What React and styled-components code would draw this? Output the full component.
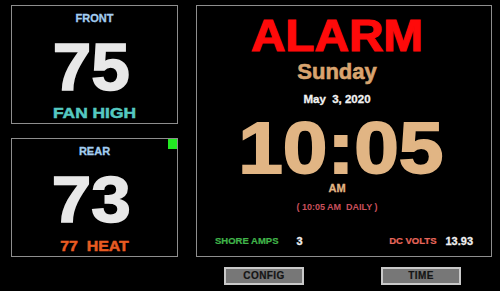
import React from "react";
import styled, { createGlobalStyle } from "styled-components";

const GlobalStyle = createGlobalStyle`
  html, body { margin: 0; padding: 0; background: #000; }
`;

const Screen = styled.div`
  width: 500px;
  height: 291px;
  box-sizing: border-box;
  padding: 5px 0 0 11px;
  display: flex;
  gap: 18px;
  background: #000;
  overflow: hidden;
  font-family: "Liberation Sans", Arial, sans-serif;
  font-weight: 700;
`;

const LeftColumn = styled.div`
  width: 167px;
  display: flex;
  flex-direction: column;
  gap: 14px;
`;

const Gauge = styled.section`
  position: relative;
  height: 119px;
  box-sizing: border-box;
  border: 1px solid #8e8e8e;
  padding-top: 7px;
  display: flex;
  flex-direction: column;
`;

const ZoneLabel = styled.div`
  height: 10px;
  line-height: 10px;
  font-size: 11px;
  font-weight: 700;
  color: #a3cdf0;
  text-align: center;
  -webkit-text-stroke: 0.3px #a3cdf0;
`;

const Temp = styled.div`
  height: 48px;
  line-height: 48px;
  margin-top: 20px;
  font-size: ${(p) => p.$size}px;
  font-weight: 700;
  color: #e8e8e8;
  text-align: center;
  padding-right: 6px;
  transform: scaleX(${(p) => p.$sx});
  -webkit-text-stroke: 1.6px #e8e8e8;
`;

const Mode = styled.div`
  height: 12px;
  line-height: 12px;
  margin-top: 16px;
  font-size: 15px;
  font-weight: 700;
  color: ${(p) => p.$color};
  text-align: center;
  white-space: pre;
  transform: scaleX(${(p) => p.$sx});
  -webkit-text-stroke: 0.5px ${(p) => p.$color};
`;

const StatusDot = styled.span`
  position: absolute;
  top: 0;
  right: 0;
  width: 9px;
  height: 10px;
  background: #23e823;
`;

const RightColumn = styled.div`
  width: 296px;
  display: flex;
  flex-direction: column;
`;

const Panel = styled.section`
  height: 252px;
  box-sizing: border-box;
  border: 1px solid #8e8e8e;
  display: flex;
  flex-direction: column;
`;

const Stack = styled.div`
  padding: 13px 14px 0 0;
  display: flex;
  flex-direction: column;
  text-align: center;
  white-space: pre;
`;

const AlarmTitle = styled.div`
  height: 34px;
  line-height: 34px;
  font-size: 45px;
  font-weight: 700;
  color: #ff0a0a;
  transform: scaleX(1.06);
  -webkit-text-stroke: 1.2px #ff0a0a;
`;

const DayName = styled.div`
  height: 16px;
  line-height: 16px;
  margin-top: 11px;
  font-size: 22px;
  font-weight: 700;
  color: #d9a46f;
  -webkit-text-stroke: 0.6px #d9a46f;
`;

const DateLine = styled.div`
  height: 10px;
  line-height: 10px;
  margin-top: 14px;
  font-size: 11.5px;
  font-weight: 700;
  color: #f2f2f2;
  -webkit-text-stroke: 0.3px #f2f2f2;
`;

const Clock = styled.div`
  height: 54px;
  line-height: 54px;
  margin-top: 17px;
  font-size: 73px;
  font-weight: 700;
  color: #e1b584;
  padding-left: 7px;
  transform: scaleX(1.1);
  -webkit-text-stroke: 1.8px #e1b584;
`;

const Meridiem = styled.div`
  height: 10px;
  line-height: 10px;
  margin-top: 8px;
  font-size: 11px;
  font-weight: 700;
  color: #e1b584;
  -webkit-text-stroke: 0.3px #e1b584;
`;

const AlarmInfo = styled.div`
  height: 8px;
  line-height: 8px;
  margin-top: 10px;
  font-size: 9px;
  font-weight: 700;
  color: #c9505c;
`;

const StatsRow = styled.div`
  margin-top: 25px;
  padding: 0 18px;
  height: 10px;
  line-height: 10px;
  display: flex;
  justify-content: space-between;
  align-items: center;
`;

const Stat = styled.div`
  display: flex;
  align-items: center;
  gap: ${(p) => p.$gap}px;
`;

const StatLabel = styled.span`
  font-size: 9.5px;
  font-weight: 700;
  color: ${(p) => p.$color};
  -webkit-text-stroke: 0.2px ${(p) => p.$color};
`;

const StatValue = styled.span`
  font-size: 11px;
  font-weight: 700;
  color: #f0f0f0;
  -webkit-text-stroke: 0.3px #f0f0f0;
`;

const ButtonRow = styled.div`
  margin-top: 10px;
  padding-left: 28px;
  display: flex;
  gap: 77px;
`;

const Button = styled.button`
  width: 80px;
  height: 18px;
  box-sizing: border-box;
  border: 2px solid #c9c9c9;
  background: #777;
  color: #151515;
  font-family: "Liberation Sans", Arial, sans-serif;
  font-weight: 700;
  font-size: 10px;
  letter-spacing: 0.4px;
  padding: 0;
  line-height: 14px;
  cursor: pointer;
  -webkit-text-stroke: 0.2px #151515;
`;

export default function App() {
  return (
    <>
      <GlobalStyle />
      <Screen>
        <LeftColumn>
          <Gauge>
            <ZoneLabel>FRONT</ZoneLabel>
            <Temp $size={66} $sx={1.05}>75</Temp>
            <Mode $color="#55c9c1" $sx={1.16}>FAN HIGH</Mode>
          </Gauge>
          <Gauge>
            <StatusDot />
            <ZoneLabel>REAR</ZoneLabel>
            <Temp $size={64} $sx={1.11}>73</Temp>
            <Mode $color="#e85b22" $sx={1.06}>{"77  HEAT"}</Mode>
          </Gauge>
        </LeftColumn>
        <RightColumn>
          <Panel>
            <Stack>
              <AlarmTitle>ALARM</AlarmTitle>
              <DayName>Sunday</DayName>
              <DateLine>{"May  3, 2020"}</DateLine>
              <Clock>10:05</Clock>
              <Meridiem>AM</Meridiem>
              <AlarmInfo>{"( 10:05 AM  DAILY )"}</AlarmInfo>
            </Stack>
            <StatsRow>
              <Stat $gap={18}>
                <StatLabel $color="#40b54a">SHORE AMPS</StatLabel>
                <StatValue>3</StatValue>
              </Stat>
              <Stat $gap={9}>
                <StatLabel $color="#e8675b">DC VOLTS</StatLabel>
                <StatValue>13.93</StatValue>
              </Stat>
            </StatsRow>
          </Panel>
          <ButtonRow>
            <Button>CONFIG</Button>
            <Button>TIME</Button>
          </ButtonRow>
        </RightColumn>
      </Screen>
    </>
  );
}
